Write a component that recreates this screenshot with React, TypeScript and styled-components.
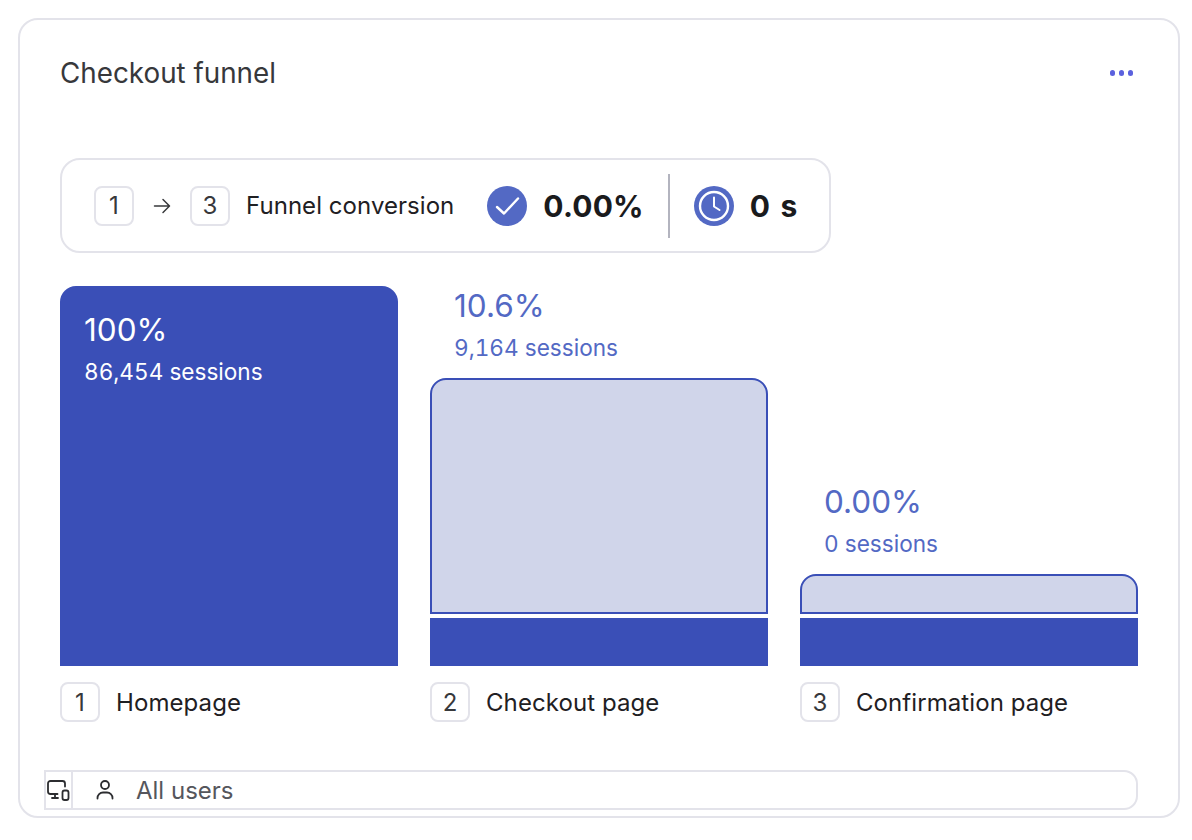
import { FC } from 'react'
import styled, { createGlobalStyle } from 'styled-components'

const GlobalStyle = createGlobalStyle`
  html, body {
    margin: 0;
    background: #ffffff;
  }
  body {
    font-family: Inter, "Liberation Sans", sans-serif;
    color: #1f2023;
  }
`

const Page = styled.div`
  padding: 18px 12px 0 18px;
  box-sizing: border-box;
  width: 1192px;
  height: 840px;
`

const Card = styled.section`
  box-sizing: border-box;
  width: 1162px;
  height: 800px;
  border: 2px solid #e3e3ea;
  border-radius: 20px;
  padding: 32px 40px 0;
  background: #fff;
`

const Header = styled.header`
  display: flex;
  justify-content: space-between;
  align-items: center;
  height: 42px;
`

const Title = styled.h2`
  margin: 0;
  font-size: 27.8px;
  font-weight: 400;
  color: #37383b;
`

const MenuButton = styled.button`
  display: flex;
  gap: 3.5px;
  border: 0;
  padding: 0;
  margin-right: 5px;
  background: none;
`

const Dot = styled.span`
  width: 5.5px;
  height: 5.5px;
  border-radius: 50%;
  background: #5b61de;
`

const Summary = styled.div`
  box-sizing: border-box;
  display: flex;
  align-items: center;
  width: 771px;
  height: 95px;
  margin-top: 64px;
  padding: 0 32px;
  border: 2px solid #e3e3ea;
  border-radius: 20px;
`

const StepBadge = styled.span`
  box-sizing: border-box;
  flex: none;
  display: flex;
  align-items: center;
  justify-content: center;
  width: 40px;
  height: 40px;
  border: 2px solid #e3e3ea;
  border-radius: 8px;
  font-size: 24px;
  color: #37383b;
`

const Arrow = styled.svg`
  width: 20px;
  height: 20px;
  margin: 0 18px;
  flex: none;
`

const SummaryLabel = styled.span`
  margin-left: 16px;
  font-size: 24px;
  letter-spacing: 0.05px;
  white-space: nowrap;
  color: #1f2023;
`

const StatIcon = styled.svg`
  flex: none;
  width: 40px;
  height: 40px;
`

const StatValue = styled.strong`
  margin-left: 16px;
  font-size: 30px;
  font-weight: 700;
  letter-spacing: 0.2px;
  word-spacing: 3px;
  color: #1a1b1d;
  white-space: nowrap;
`

const ConversionIcon = styled(StatIcon)`
  margin-left: 33px;
`

const Divider = styled.span`
  flex: none;
  width: 2px;
  height: 64px;
  margin: 0 24px;
  background: #b3b4bf;
`

const Funnel = styled.div`
  display: grid;
  grid-template-columns: repeat(3, 338px);
  column-gap: 32px;
  margin-top: 33px;
`

const Step = styled.div`
  display: flex;
  flex-direction: column;
`

const BarArea = styled.div`
  display: flex;
  flex-direction: column;
  justify-content: flex-end;
  height: 380px;
`

const Stats = styled.div<{ $inside?: boolean }>`
  flex: none;
  padding-left: 24px;
  padding-bottom: ${p => (p.$inside ? '0' : '10px')};
  color: ${p => (p.$inside ? '#ffffff' : '#5369c4')};
`

const Percent = styled.div`
  font-size: 31.5px;
  line-height: 40px;
`

const Sessions = styled.div`
  margin-top: 2px;
  font-size: 22.6px;
  line-height: 40px;
  font-variant-numeric: tabular-nums;
`

const FullBar = styled.div`
  box-sizing: border-box;
  height: 380px;
  padding-top: 24px;
  border-radius: 16px 16px 0 0;
  background: #3a4fb7;
`

const DropBar = styled.div<{ $height: number }>`
  box-sizing: border-box;
  flex: none;
  height: ${p => p.$height}px;
  border: 2px solid #3a4fb7;
  border-radius: 16px 16px 0 0;
  background: #d0d5ea;
`

const KeptBar = styled.div`
  flex: none;
  height: 48px;
  margin-top: 4px;
  background: #3a4fb7;
`

const StepLabel = styled.div`
  display: flex;
  align-items: center;
  gap: 16px;
  margin-top: 16px;
  font-size: 24px;
  letter-spacing: 0.08px;
  color: #1f2023;
`

const Footer = styled.div`
  box-sizing: border-box;
  display: flex;
  align-items: stretch;
  width: 1094px;
  height: 40px;
  margin: 48px 0 0 -16px;
  border: 2px solid #e3e3ea;
  border-radius: 0 14px 14px 0;
`

const DeviceCell = styled.div`
  flex: none;
  display: flex;
  align-items: center;
  justify-content: center;
  width: 25px;
  border-right: 2px solid #e3e3ea;
`

const SegmentCell = styled.div`
  display: flex;
  align-items: center;
  gap: 19px;
  padding-left: 20px;
  font-size: 24px;
  color: #55565c;
`

const FooterIcon = styled.svg`
  flex: none;
  fill: none;
  stroke: #2c2d30;
  stroke-width: 1.8;
  stroke-linecap: round;
  stroke-linejoin: round;
`

interface FunnelStep {
  index: number
  name: string
  percent: string
  sessions: string
  dropHeight?: number
}

const steps: FunnelStep[] = [
  { index: 1, name: 'Homepage', percent: '100%', sessions: '86,454 sessions' },
  { index: 2, name: 'Checkout page', percent: '10.6%', sessions: '9,164 sessions', dropHeight: 236 },
  { index: 3, name: 'Confirmation page', percent: '0.00%', sessions: '0 sessions', dropHeight: 40 },
]

const StepColumn: FC<{ step: FunnelStep }> = ({ step }) => (
  <Step>
    <BarArea>
      {step.dropHeight === undefined ? (
        <FullBar>
          <Stats $inside>
            <Percent>{step.percent}</Percent>
            <Sessions>{step.sessions}</Sessions>
          </Stats>
        </FullBar>
      ) : (
        <>
          <Stats>
            <Percent>{step.percent}</Percent>
            <Sessions>{step.sessions}</Sessions>
          </Stats>
          <DropBar $height={step.dropHeight} />
          <KeptBar />
        </>
      )}
    </BarArea>
    <StepLabel>
      <StepBadge>{step.index}</StepBadge>
      {step.name}
    </StepLabel>
  </Step>
)

const App: FC = () => (
  <Page>
    <GlobalStyle />
    <Card>
      <Header>
        <Title>Checkout funnel</Title>
        <MenuButton aria-label='More'>
          <Dot />
          <Dot />
          <Dot />
        </MenuButton>
      </Header>

      <Summary>
        <StepBadge>1</StepBadge>
        <Arrow viewBox='0 0 20 20' fill='none' stroke='#37383b' strokeWidth='1.5' strokeLinecap='round' strokeLinejoin='round'>
          <path d='M2.5 10H17M11 3.5L17.5 10L11 16.5' />
        </Arrow>
        <StepBadge>3</StepBadge>
        <SummaryLabel>Funnel conversion</SummaryLabel>
        <ConversionIcon viewBox='0 0 40 40'>
          <circle cx='20' cy='20' r='20' fill='#5369c4' />
          <path d='M10 21L17 27.5L31 12.5' fill='none' stroke='#fff' strokeWidth='2.4' strokeLinecap='round' strokeLinejoin='round' />
        </ConversionIcon>
        <StatValue>0.00%</StatValue>
        <Divider />
        <StatIcon viewBox='0 0 40 40'>
          <circle cx='20' cy='20' r='20' fill='#5369c4' />
          <circle cx='20' cy='20' r='14' fill='none' stroke='#fff' strokeWidth='2.4' />
          <path d='M20 11.5V20.5L25.5 24' fill='none' stroke='#fff' strokeWidth='2' strokeLinecap='round' strokeLinejoin='round' />
        </StatIcon>
        <StatValue>0 s</StatValue>
      </Summary>

      <Funnel>
        {steps.map(step => (
          <StepColumn key={step.index} step={step} />
        ))}
      </Funnel>

      <Footer>
        <DeviceCell>
          <FooterIcon width='23' height='23' viewBox='0 0 23 23'>
            <path d='M10.5 15H3.5A2.5 2.5 0 0 1 1 12.5V4.5A2.5 2.5 0 0 1 3.5 2H15.5A2.5 2.5 0 0 1 18 4.5V7.5' />
            <path d='M5 19H11M8 15V19' />
            <rect x='15.5' y='11.5' width='6' height='9.5' rx='2' />
          </FooterIcon>
        </DeviceCell>
        <SegmentCell>
          <FooterIcon width='24' height='24' viewBox='0 0 24 24'>
            <circle cx='12' cy='7' r='4' />
            <path d='M4.5 20.5V20A5.5 5.5 0 0 1 10 14.5H14A5.5 5.5 0 0 1 19.5 20V20.5' />
          </FooterIcon>
          All users
        </SegmentCell>
      </Footer>
    </Card>
  </Page>
)

export default App
